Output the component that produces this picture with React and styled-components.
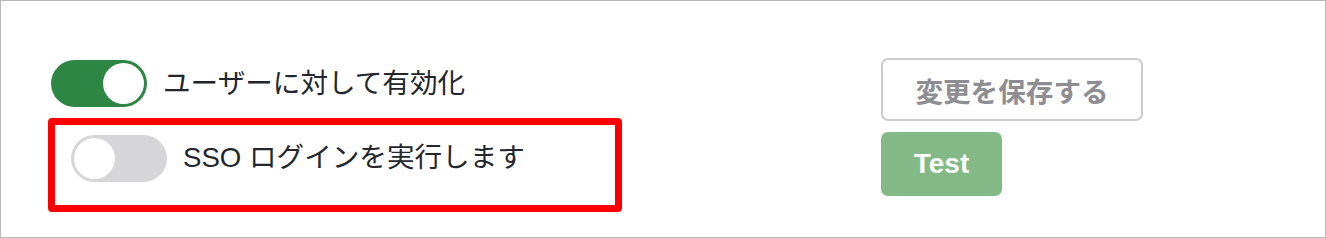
import React from "react";
import styled, { createGlobalStyle } from "styled-components";

const GlobalStyle = createGlobalStyle`
  html, body {
    margin: 0;
    padding: 0;
    background: #ffffff;
  }
  body {
    font-family: "Noto Sans CJK JP", "Noto Sans", sans-serif;
  }
`;

export default function App() {
  return (
    <>
      <GlobalStyle />
      <StyledPage>
        <StyledSettings>
          <ToggleRow>
            <Toggle on />
            <StyledLabel>ユーザーに対して有効化</StyledLabel>
          </ToggleRow>
          <HighlightRow>
            <Toggle />
            <StyledLabel>SSO ログインを実行します</StyledLabel>
          </HighlightRow>
        </StyledSettings>
        <StyledActions>
          <SaveButton type="button">変更を保存する</SaveButton>
          <TestButton type="button">Test</TestButton>
        </StyledActions>
      </StyledPage>
    </>
  );
}

function Toggle({ on }) {
  return (
    <StyledTrack $on={on} role="switch" aria-checked={!!on}>
      <StyledKnob $on={on} />
    </StyledTrack>
  );
}

const StyledPage = styled.main`
  box-sizing: border-box;
  width: 1326px;
  height: 238px;
  border: 1px solid #b9b9b9;
  padding: 57px 0 0 47px;
  display: flex;
  align-items: flex-start;
  gap: 259px;
`;

const StyledSettings = styled.section`
  display: flex;
  flex-direction: column;
  gap: 11px;
  margin-top: 2px;
`;

const ToggleRow = styled.div`
  display: flex;
  align-items: center;
  gap: 16px;
  height: 47px;
  padding-left: 3px;
`;

const HighlightRow = styled.div`
  box-sizing: border-box;
  display: flex;
  align-items: center;
  gap: 16px;
  width: 574px;
  height: 94px;
  padding: 0 16px 14px 16px;
  border: 7px solid #ff0000;
  border-radius: 4px;
`;

const StyledTrack = styled.div`
  box-sizing: border-box;
  flex: none;
  width: 96px;
  height: 47px;
  padding: 3px;
  border-radius: 24px;
  display: flex;
  justify-content: ${(p) => (p.$on ? "flex-end" : "flex-start")};
  align-items: center;
  background: ${(p) => (p.$on ? "#2e8645" : "#d6d6d9")};
`;

const StyledKnob = styled.span`
  width: 41px;
  height: 41px;
  border-radius: 50%;
  background: #ffffff;
`;

const StyledLabel = styled.span`
  font-family: "Liberation Sans", "Noto Sans CJK JP", sans-serif;
  font-size: 27.6px;
  line-height: 1;
  color: #23262c;
  white-space: nowrap;
`;

const StyledActions = styled.div`
  display: flex;
  flex-direction: column;
  align-items: flex-start;
  gap: 11px;
`;

const SaveButton = styled.button`
  box-sizing: border-box;
  width: 262px;
  height: 63px;
  border: 2px solid #cbcbcd;
  border-radius: 7px;
  background: #ffffff;
  color: #8d8d92;
  font-family: "Noto Sans CJK JP", sans-serif;
  font-size: 27.6px;
  font-weight: 700;
  padding: 0;
`;

const TestButton = styled.button`
  box-sizing: border-box;
  width: 121px;
  height: 64px;
  border: none;
  border-radius: 7px;
  background: #82b987;
  color: #ffffff;
  font-family: "Liberation Sans", Arial, sans-serif;
  font-size: 28px;
  font-weight: 700;
  padding: 0;
`;
